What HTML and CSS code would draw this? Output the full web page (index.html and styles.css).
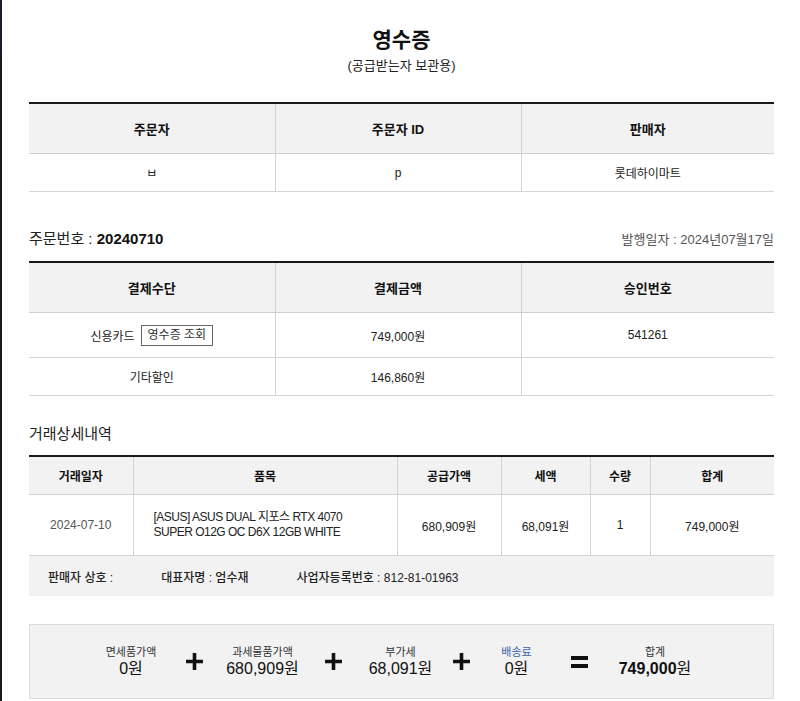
FILE: index.html
```html
<!DOCTYPE html>
<html lang="ko">
<head>
<meta charset="utf-8">
<title>영수증</title>
<link rel="stylesheet" href="styles.css">
</head>
<body>
<div class="page">
  <header class="head">
    <h1 class="title">영수증</h1>
    <p class="subtitle">(공급받는자 보관용)</p>
  </header>

  <table class="tbl t1">
    <colgroup><col class="w246"><col class="w246"><col class="w253"></colgroup>
    <thead><tr><th>주문자</th><th>주문자 ID</th><th>판매자</th></tr></thead>
    <tbody><tr><td>ㅂ</td><td>p</td><td>롯데하이마트</td></tr></tbody>
  </table>

  <div class="order">
    <div class="order-no">주문번호 : <b>20240710</b></div>
    <div class="issue">발행일자 : 2024년07월17일</div>
  </div>

  <table class="tbl t2">
    <colgroup><col class="w246"><col class="w246"><col class="w253"></colgroup>
    <thead><tr><th>결제수단</th><th>결제금액</th><th>승인번호</th></tr></thead>
    <tbody>
      <tr class="tall"><td><span class="pay">신용카드<span class="btn">영수증 조회</span></span></td><td>749,000원</td><td>541261</td></tr>
      <tr><td>기타할인</td><td>146,860원</td><td></td></tr>
    </tbody>
  </table>

  <h2 class="section-title">거래상세내역</h2>

  <table class="tbl t3">
    <colgroup><col class="w104"><col class="w264"><col class="w104"><col class="w89"><col class="w60"><col class="w124"></colgroup>
    <thead><tr><th>거래일자</th><th>품목</th><th>공급가액</th><th>세액</th><th>수량</th><th>합계</th></tr></thead>
    <tbody>
      <tr class="prod">
        <td class="date">2024-07-10</td>
        <td class="product">[ASUS] ASUS DUAL 지포스 RTX 4070<br>SUPER O12G OC D6X 12GB WHITE</td>
        <td>680,909원</td><td>68,091원</td><td>1</td><td>749,000원</td>
      </tr>
      <tr class="seller">
        <td colspan="6"><div class="seller-info"><span>판매자 상호 :</span><span>대표자명 : 엄수재</span><span>사업자등록번호 : 812-81-01963</span></div></td>
      </tr>
    </tbody>
  </table>

  <div class="summary">
    <div class="sum-item"><span class="sum-label">면세품가액</span><span class="sum-value">0원</span></div>
    <div class="op"><svg width="17" height="17" viewBox="0 0 17 17"><path d="M8.5 0v17M0 8.5h17" stroke="#111" stroke-width="3.6"/></svg></div>
    <div class="sum-item"><span class="sum-label">과세물품가액</span><span class="sum-value">680,909원</span></div>
    <div class="op"><svg width="17" height="17" viewBox="0 0 17 17"><path d="M8.5 0v17M0 8.5h17" stroke="#111" stroke-width="3.6"/></svg></div>
    <div class="sum-item"><span class="sum-label">부가세</span><span class="sum-value">68,091원</span></div>
    <div class="op"><svg width="17" height="17" viewBox="0 0 17 17"><path d="M8.5 0v17M0 8.5h17" stroke="#111" stroke-width="3.6"/></svg></div>
    <div class="sum-item"><span class="sum-label blue">배송료</span><span class="sum-value">0원</span></div>
    <div class="op"><svg width="17" height="12" viewBox="0 0 17 12"><path d="M0 2h17M0 10h17" stroke="#111" stroke-width="4"/></svg></div>
    <div class="sum-item"><span class="sum-label">합계</span><span class="sum-value total"><b>749,000</b>원</span></div>
  </div>
</div>
</body>
</html>
```

FILE: styles.css
```css
html {
  background: linear-gradient(to bottom, #1d1838 0, #1d1838 55px, #1a1a1a 55px) 0 0 / 2px 100vh no-repeat, #fff;
}
body {
  margin: 0;
  font-family: "Liberation Sans", "Noto Sans CJK KR", sans-serif;
  color: #222;
}
.page {
  padding: 28px 26px 0 29px;
}
.title {
  margin: 0;
  font-size: 21px;
  line-height: 24px;
  font-weight: 700;
  text-align: center;
  color: #111;
}
.subtitle {
  margin: 6px 0 0;
  font-size: 13px;
  line-height: 16px;
  text-align: center;
  color: #222;
}
.w246 { width: 246px; }
.w253 { width: 253px; }
.w104 { width: 104px; }
.w264 { width: 264px; }
.w89 { width: 89px; }
.w60 { width: 60px; }
.w124 { width: 124px; }

.tbl {
  width: 100%;
  border-collapse: collapse;
  table-layout: fixed;
  border-top: 2px solid #1a1a1a;
}
.tbl th {
  background: #f2f2f2;
  font-size: 13px;
  font-weight: 700;
  color: #111;
  height: 49px;
  padding: 0;
  border-bottom: 1px solid #cfcfcf;
}
.tbl td {
  font-size: 12px;
  color: #222;
  text-align: center;
  padding: 0;
  height: 37px;
  border-bottom: 1px solid #d6d6d6;
}
.tbl th + th,
.tbl td + td {
  border-left: 1px solid #d3d3d3;
}
.t1 { margin-top: 28px; }

.order {
  display: flex;
  justify-content: space-between;
  align-items: baseline;
  margin-top: 37px;
  line-height: 20px;
}
.order-no { font-size: 15px; color: #222; }
.order-no b { font-weight: 700; color: #111; }
.issue { font-size: 13px; color: #555; }

.t2 { margin-top: 11px; }
.t2 .tall td { height: 44px; }
.pay {
  display: inline-flex;
  align-items: center;
  gap: 6px;
  vertical-align: middle;
}
.btn {
  display: inline-block;
  box-sizing: border-box;
  height: 21px;
  line-height: 19px;
  padding: 0 6px;
  border: 1px solid #666;
  font-size: 12px;
  color: #333;
  background: #fff;
}

.section-title {
  margin: 28px 0 0;
  font-size: 15px;
  font-weight: 400;
  line-height: 20px;
  color: #222;
}

.t3 { margin-top: 11px; }
.t3 th { font-size: 12px; height: 37px; }
.t3 .prod td { height: 60px; }
.t3 .date { color: #555; }
.t3 .product {
  text-align: left;
  padding-left: 20px;
  line-height: 15px;
  letter-spacing: -0.5px;
}
.t3 .seller td {
  background: #f2f2f2;
  height: 40px;
  border-bottom: none;
  text-align: left;
}
.seller-info {
  display: flex;
  gap: 48px;
  padding-left: 19px;
  font-weight: 500;
  color: #222;
}

.summary {
  margin-top: 28px;
  height: 73px;
  border: 1px solid #dcdcdc;
  background: #f2f2f2;
  display: grid;
  grid-template-columns: 60px 66px 71px 70px 65px 56px 55px 70px 82px;
  justify-content: center;
  align-items: center;
  padding-right: 6px;
}
.sum-item {
  display: flex;
  flex-direction: column;
  align-items: center;
  white-space: nowrap;
}
.sum-label {
  font-size: 11px;
  line-height: 14px;
  color: #333;
}
.sum-label.blue { color: #3a62a8; }
.sum-value {
  font-size: 16px;
  line-height: 19px;
  color: #111;
}
.sum-value.total b { font-weight: 700; }
.op {
  display: flex;
  justify-content: center;
  align-items: center;
}
```
